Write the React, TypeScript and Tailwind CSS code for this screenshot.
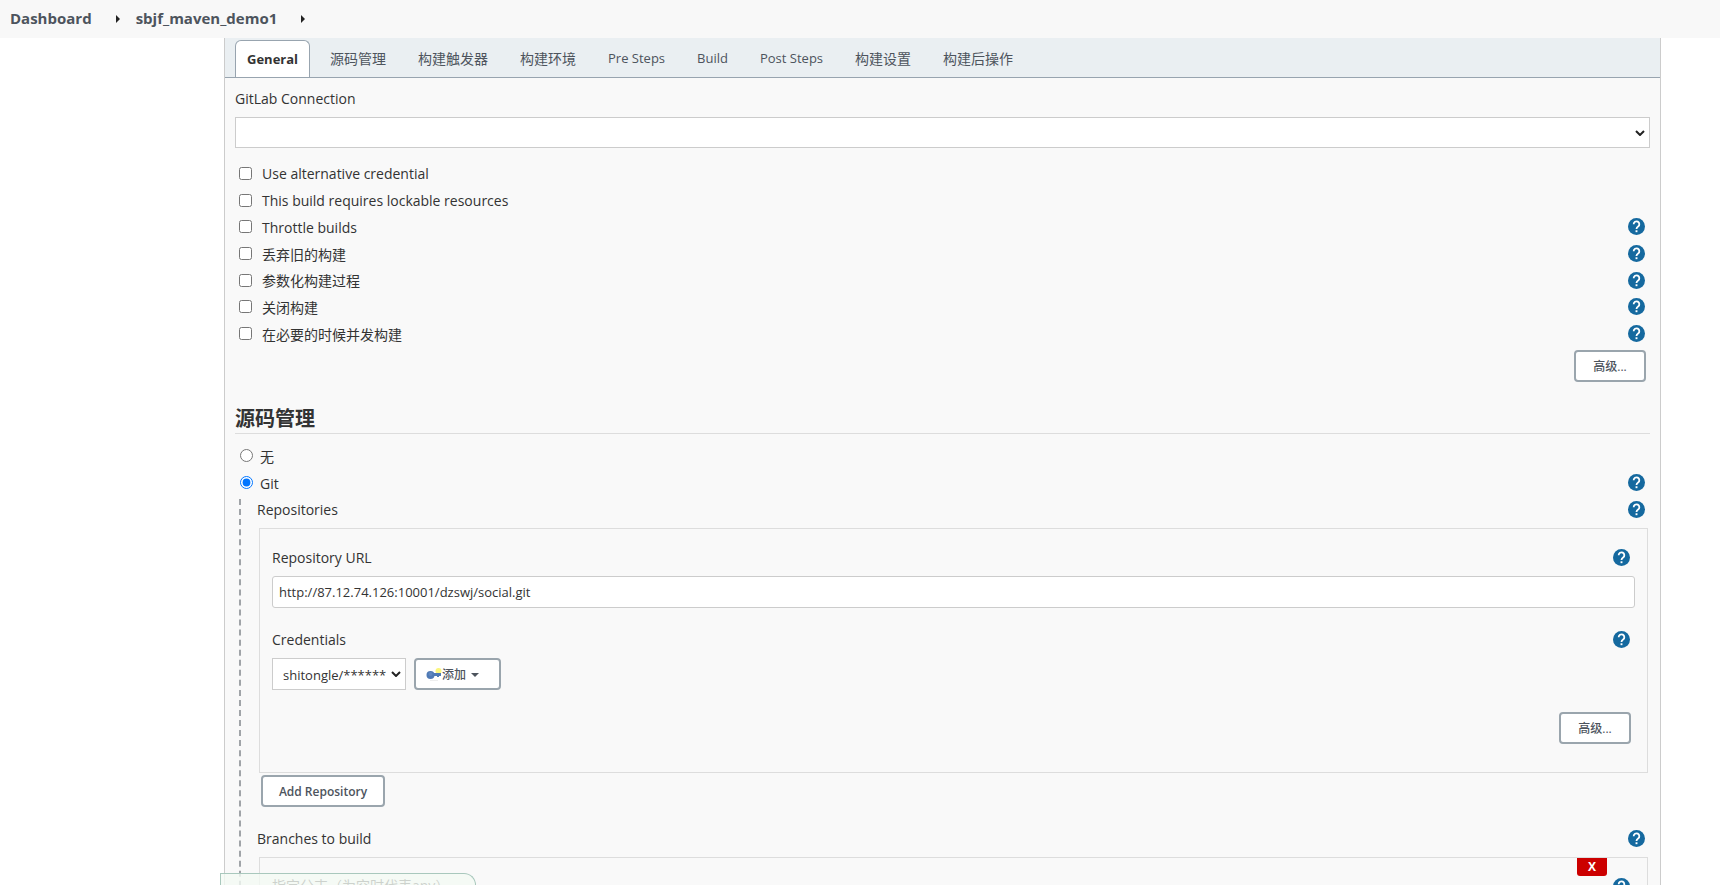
import { ReactNode } from "react";

const tabs = [
  { label: "源码管理", latin: false },
  { label: "构建触发器", latin: false },
  { label: "构建环境", latin: false },
  { label: "Pre Steps", latin: true },
  { label: "Build", latin: true },
  { label: "Post Steps", latin: true },
  { label: "构建设置", latin: false },
  { label: "构建后操作", latin: false },
];

const options = [
  { id: "alt-credential", label: "Use alternative credential", help: false },
  { id: "lockable", label: "This build requires lockable resources", help: false },
  { id: "throttle", label: "Throttle builds", help: true },
  { id: "discard", label: "丢弃旧的构建", help: true },
  { id: "params", label: "参数化构建过程", help: true },
  { id: "disable", label: "关闭构建", help: true },
  { id: "concurrent", label: "在必要的时候并发构建", help: true },
];

function HelpButton() {
  return (
    <button type="button" aria-label="Help" className="mb-[2px] block h-[17px] w-[17px] shrink-0">
      <svg viewBox="3 3 18 18" className="h-[17px] w-[17px]" fill="#15699f">
        <circle cx="12" cy="12" r="9" />
        <path
          d="M9 9.6a3 3 0 1 1 4.7 2.4c-1 .7-1.7 1.2-1.7 2.6"
          fill="none"
          stroke="#fff"
          strokeWidth="1.9"
        />
        <rect x="11" y="16" width="2" height="2" fill="#fff" />
      </svg>
    </button>
  );
}

function Chevron() {
  return (
    <svg viewBox="0 0 10 6" className="pointer-events-none h-[6px] w-[10px]" fill="none" stroke="#222" strokeWidth="2">
      <path d="M1 1l4 4 4-4" />
    </svg>
  );
}

function Caret() {
  return (
    <svg viewBox="0 0 4 8" className="h-2 w-1" fill="#222">
      <path d="M0 0l4 4-4 4z" />
    </svg>
  );
}

function KeyIcon() {
  return (
    <svg viewBox="0 0 16 16" className="h-4 w-4">
      <circle cx="12.5" cy="4" r="3" fill="#fbf67c" />
      <circle cx="4.5" cy="8" r="4" fill="#4f7ab5" />
      <path d="M7 6h8v3h-2v1h-2V9H7z" fill="#4f7ab5" />
      <circle cx="4.5" cy="7" r="2" fill="#6188c0" />
      <path d="M4 13.5h8" stroke="#eee" />
    </svg>
  );
}

function OutlineButton({ children, className = "" }: { children: ReactNode; className?: string }) {
  return (
    <button
      type="button"
      className={`flex h-8 items-center justify-center rounded border-2 border-[#9aa5ad] bg-white pt-px text-xs text-[#4d545d] ${className}`}
    >
      {children}
    </button>
  );
}

export default function App() {
  return (
    <div className="h-screen overflow-hidden bg-white font-['Open_Sans','Noto_Sans_CJK_SC',sans-serif] text-sm text-[#333]">
      <nav className="flex h-[38px] items-center bg-[#f8f8f8] pl-[10px] text-[15px] font-bold text-[#4d545d]">
        <a href="#dashboard">Dashboard</a>
        <span className="mr-4 ml-6">
          <Caret />
        </span>
        <a href="#job">sbjf_maven_demo1</a>
        <span className="ml-6">
          <Caret />
        </span>
      </nav>

      <main className="mr-[59px] ml-56 border-x border-[#ccc] bg-[#f9f9f9]">
        <div className="flex h-10 items-end border-b border-[#98a4af] bg-[#eaeff2] pl-[10px]" role="tablist">
          <button
            type="button"
            role="tab"
            aria-selected
            className="mr-1 h-[37px] rounded-t-md border border-b-0 border-[#98a4af] bg-white px-[11px] text-[13px] font-bold text-[#333]"
          >
            General
          </button>
          {tabs.map((tab) => (
            <button
              key={tab.label}
              type="button"
              role="tab"
              aria-selected={false}
              className={`h-[37px] px-4 text-[#4d545d] ${tab.latin ? "text-[13px]" : "text-sm"}`}
            >
              {tab.label}
            </button>
          ))}
        </div>

        <form className="px-[10px]">
          <label htmlFor="gitlab" className="mt-[11px] block leading-5">
            GitLab Connection
          </label>
          <div className="mt-2 grid items-center">
            <select id="gitlab" className="col-start-1 row-start-1 h-[31px] w-full appearance-none border border-[#ccc] bg-white" />
            <span className="col-start-1 row-start-1 mr-[5px] justify-self-end">
              <Chevron />
            </span>
          </div>

          <div className="mt-[13px] flex h-[187px] flex-col">
            {options.map((opt) => (
              <div key={opt.id} className="flex flex-1 items-center pr-[5px] pl-1">
                <input id={opt.id} type="checkbox" className="mb-[2px] h-[13px] w-[13px]" />
                <label htmlFor={opt.id} className="ml-[10px] flex-1">
                  {opt.label}
                </label>
                {opt.help && <HelpButton />}
              </div>
            ))}
          </div>
          <div className="mt-[2px] flex justify-end pr-1">
            <OutlineButton className="w-[72px] font-medium">高级...</OutlineButton>
          </div>

          <h2 className="mt-[23px] border-b border-[#ddd] text-xl leading-7 font-bold">源码管理</h2>
          <div className="mt-[9px] flex h-[27px] items-center pl-[5px]">
            <input id="scm-none" type="radio" name="scm" className="mb-[2px] h-[13px] w-[13px]" />
            <label htmlFor="scm-none" className="ml-[7px]">
              无
            </label>
          </div>
          <div className="flex h-[27px] items-center pr-[5px] pl-[5px]">
            <input id="scm-git" type="radio" name="scm" defaultChecked className="mb-[2px] h-[13px] w-[13px]" />
            <label htmlFor="scm-git" className="ml-[7px] flex-1">
              Git
            </label>
            <HelpButton />
          </div>

          <div className="mt-[2px] ml-1 border-l-2 border-dashed border-[#a0a4a8] pl-4">
            <div className="flex h-[22px] items-center justify-between pr-[5px]">
              Repositories
              <HelpButton />
            </div>

            <div className="mx-[2px] mt-[7px] border border-[#ddd] px-3 pt-[19px] pb-7">
              <div className="flex h-5 items-center justify-between pr-[5px]">
                <label htmlFor="repo-url">Repository URL</label>
                <HelpButton />
              </div>
              <input
                id="repo-url"
                type="text"
                defaultValue="http://87.12.74.126:10001/dzswj/social.git"
                className="mt-2 block h-8 w-full rounded-[3px] border border-[#ccc] bg-white px-[6px] text-[13px]"
              />
              <div className="mt-[22px] flex h-5 items-center justify-between pr-[5px]">
                <label htmlFor="credentials">Credentials</label>
                <HelpButton />
              </div>
              <div className="mt-2 flex gap-2">
                <div className="grid items-center">
                  <select
                    id="credentials"
                    className="col-start-1 row-start-1 h-8 w-[134px] appearance-none border border-[#ccc] bg-white pt-[3px] pl-[10px] text-[13px]"
                  >
                    <option>shitongle/******</option>
                  </select>
                  <span className="col-start-1 row-start-1 mr-[5px] justify-self-end">
                    <Chevron />
                  </span>
                </div>
                <OutlineButton className="w-[87px] pr-[10px] font-medium">
                  <KeyIcon />
                  添加
                  <svg viewBox="0 0 8 4" className="ml-[5px] h-1 w-2" fill="#4d545d">
                    <path d="M0 0h8L4 4z" />
                  </svg>
                </OutlineButton>
              </div>
              <div className="mt-[22px] flex justify-end pr-1">
                <OutlineButton className="w-[72px] font-medium">高级...</OutlineButton>
              </div>
            </div>
            <OutlineButton className="mt-[2px] ml-1 w-[124px] font-semibold">Add Repository</OutlineButton>

            <div className="mt-[22px] flex h-5 items-center justify-between pr-[5px]">
              Branches to build
              <HelpButton />
            </div>
            <div className="mx-[2px] mt-2 h-20 border border-[#ddd] px-3">
              <div className="flex items-start pr-[5px]">
                <label htmlFor="branch" className="mt-[18px] flex-1">
                  指定分支（为空时代表any）
                </label>
                <button
                  type="button"
                  aria-label="Delete branch"
                  className="mr-[6px] h-[18px] w-[30px] rounded-b-[3px] bg-[#c00] text-xs font-bold text-white"
                >
                  X
                </button>
                <span className="mt-5">
                  <HelpButton />
                </span>
              </div>
              <input id="branch" type="text" className="mt-2 block h-8 w-full border border-[#ccc] bg-white" />
            </div>
          </div>
        </form>
      </main>

      <div className="fixed bottom-0 left-[220px] h-3 w-64 rounded-tr-xl border border-b-0 border-[#a9c8bd] bg-[#f4faf4]/80" />
    </div>
  );
}
